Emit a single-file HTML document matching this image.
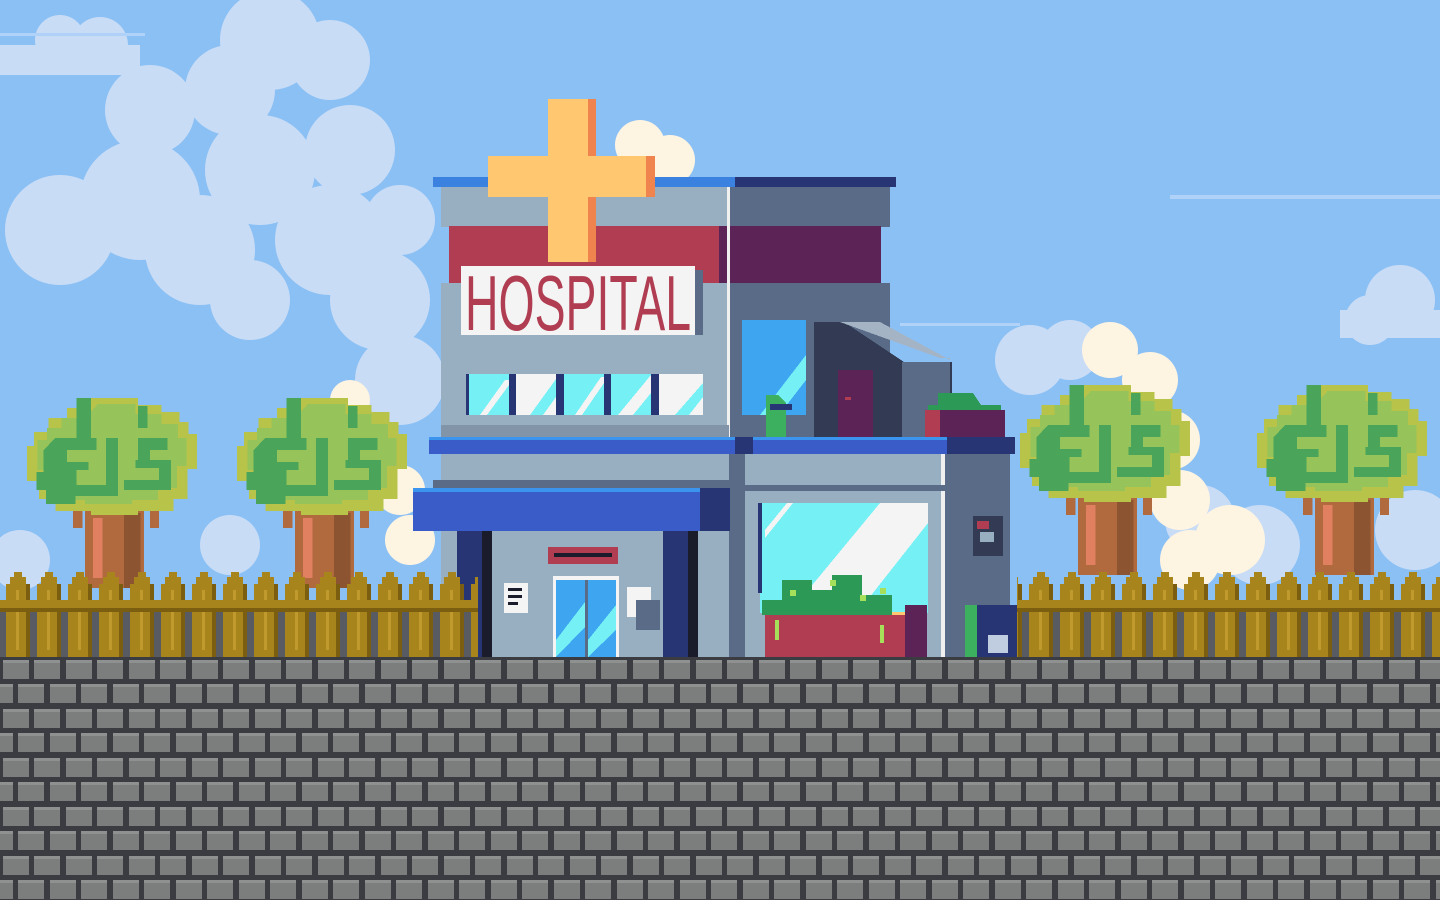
<!DOCTYPE html>
<html><head><meta charset="utf-8"><style>
html,body{margin:0;padding:0;width:1440px;height:900px;overflow:hidden;background:#8bc0f4}
svg{display:block}
</style></head><body>
<svg width="1440" height="900" viewBox="0 0 1440 900" shape-rendering="crispEdges">
<defs>
<pattern id="brick" x="0" y="657" width="63" height="49" patternUnits="userSpaceOnUse">
<rect width="63" height="49" fill="#3a3c42"/>
<rect x="3" y="3" width="26" height="19" fill="#7b7e7d"/>
<rect x="34" y="3" width="26" height="19" fill="#7b7e7d"/>
<rect x="3" y="3" width="26" height="3" fill="#8e918f"/>
<rect x="34" y="3" width="26" height="3" fill="#8e918f"/>
<rect x="-13" y="27" width="26" height="19" fill="#7b7e7d"/>
<rect x="18" y="27" width="26" height="19" fill="#7b7e7d"/>
<rect x="50" y="27" width="26" height="19" fill="#7b7e7d"/>
<rect x="18" y="27" width="26" height="3" fill="#8e918f"/>
<rect x="50" y="27" width="26" height="3" fill="#8e918f"/>
<rect x="0" y="27" width="13" height="3" fill="#8e918f"/>
</pattern>
<pattern id="fence" x="0" y="572" width="31" height="86" patternUnits="userSpaceOnUse">
<rect x="0" y="40" width="31" height="46" fill="#585c62"/>
<rect x="6" y="12" width="24" height="74" fill="#a8841c"/>
<rect x="10" y="5" width="16" height="8" fill="#a8841c"/>
<rect x="14" y="0" width="8" height="6" fill="#a8841c"/>
<rect x="26" y="12" width="4" height="74" fill="#7c5e10"/>
<rect x="16" y="18" width="3" height="60" fill="#c09a2c"/>
<rect x="0" y="28" width="31" height="12" fill="#a8841c"/>
<rect x="0" y="36" width="31" height="4" fill="#7c5e10"/>
</pattern>
<g id="tree">
<rect x="55" y="110" width="50" height="80" fill="#b06a3e"/>
<rect x="62" y="120" width="8" height="60" fill="#e08060"/>
<rect x="88" y="115" width="14" height="75" fill="#8c5430"/>
<rect x="45" y="108" width="8" height="22" fill="#b06a3e"/>
<rect x="110" y="108" width="8" height="22" fill="#b06a3e"/>
<path d="M60 0h40v7h20v7h15v10h8v12h7v35h-8v30h-12v12h-30v4h-40v-4h-30v-12h-14v-18h-10v-35h6v-14h12v-14h16v-10h20z" fill="#b8c34a"/>
<path d="M66 6h32v10h22v10h14v14h7v28h-8v22h-16v12h-22v4h-40v-4h-22v-12h-12v-18h-6v-30h8v-12h12v-10h20z" fill="#96c45a"/>
<path d="M30 40h35v12h-25v12h18v8h-10v15h25v-47h10v58h-36v8h-25v-14h-8v-18h6v-22z" fill="#4aa45a"/>
<path d="M100 40h25v12h-15v10h18v30h-40v-10h30v-12h-20v-8h2z" fill="#4aa45a"/>
<path d="M48 0h12v40h-12z M100 8h8v22h-8z" fill="#4aa45a"/>
</g>
</defs>
<!-- clouds -->
<g fill="#c9dcf6" shape-rendering="auto">
<circle cx="60" cy="230" r="55"/><circle cx="140" cy="200" r="60"/><circle cx="200" cy="250" r="55"/>
<circle cx="150" cy="110" r="45"/><circle cx="230" cy="90" r="45"/><circle cx="270" cy="40" r="50"/><circle cx="330" cy="60" r="40"/>
<circle cx="260" cy="170" r="55"/><circle cx="350" cy="150" r="45"/><circle cx="330" cy="240" r="55"/><circle cx="380" cy="300" r="50"/>
<circle cx="400" cy="220" r="35"/><circle cx="250" cy="300" r="40"/><circle cx="400" cy="380" r="45"/>
<circle cx="60" cy="40" r="25"/><circle cx="100" cy="45" r="28"/><rect x="0" y="45" width="140" height="30"/>
<circle cx="1030" cy="360" r="35"/><circle cx="1070" cy="350" r="30"/>
<circle cx="1400" cy="300" r="35"/><circle cx="1370" cy="320" r="25"/><rect x="1340" y="310" width="100" height="28"/>
<circle cx="1260" cy="545" r="40"/><circle cx="1200" cy="520" r="35"/>
<circle cx="1415" cy="530" r="40"/>
<circle cx="20" cy="560" r="30"/><circle cx="230" cy="545" r="30"/>
</g>
<g fill="#fef4e2" shape-rendering="auto">
<circle cx="640" cy="145" r="25"/><circle cx="670" cy="160" r="25"/>
<circle cx="1110" cy="350" r="28"/><circle cx="1150" cy="380" r="28"/><circle cx="1170" cy="440" r="30"/><circle cx="1180" cy="500" r="30"/>
<circle cx="1230" cy="540" r="35"/><circle cx="1190" cy="560" r="30"/>
<circle cx="350" cy="400" r="20"/><circle cx="400" cy="490" r="25"/><circle cx="410" cy="540" r="25"/>
</g>
<g fill="#b0d2f8"><rect x="1170" y="195" width="270" height="4"/><rect x="900" y="323" width="120" height="3"/><rect x="0" y="33" width="145" height="3"/></g>
<!-- trees -->
<g transform="translate(20,398) scale(1.18 1.0)"><use href="#tree"/></g>
<g transform="translate(230,398) scale(1.18 1.0)"><use href="#tree"/></g>
<g transform="translate(1013,385) scale(1.18 1.0)"><use href="#tree"/></g>
<g transform="translate(1250,385) scale(1.18 1.0)"><use href="#tree"/></g>
<!-- building -->
<rect x="433" y="177" width="463" height="10" fill="#3b82e0"/>
<rect x="735" y="177" width="161" height="10" fill="#283574"/>
<rect x="441" y="187" width="288" height="40" fill="#97afc0"/>
<rect x="729" y="187" width="161" height="40" fill="#5a6b87"/>
<rect x="449" y="226" width="270" height="57" fill="#b03d51"/>
<rect x="719" y="226" width="162" height="57" fill="#5c2456"/>
<rect x="441" y="283" width="288" height="154" fill="#97afc0"/>
<rect x="729" y="283" width="161" height="154" fill="#5a6b87"/>
<rect x="727" y="187" width="3" height="470" fill="#f0f0f0"/>
<rect x="742" y="320" width="64" height="95" fill="#3ea6f0"/>
<path d="M760 415l46-60v25l-27 35z" fill="#75f0f4"/>
<path d="M814 322h30l60 40h48v76h-138z" fill="#323a54"/>
<path d="M840 322h40l70 38v-2h-10z" fill="#a4b4c4"/>
<rect x="902" y="362" width="48" height="76" fill="#5a6b87"/>
<rect x="838" y="370" width="35" height="68" fill="#5c2456"/>
<rect x="845" y="397" width="6" height="3" fill="#b03d51"/>
<path d="M766 395h12l8 8v35h-20z" fill="#3cb05e"/>
<rect x="770" y="404" width="22" height="6" fill="#283574"/>
<path d="M928 405h10v-12h35l8 12h20v33h-73z" fill="#2c9a56"/>
<rect x="925" y="410" width="80" height="28" fill="#5c2456"/>
<rect x="925" y="410" width="15" height="28" fill="#b03d51"/>
<!-- sign -->
<rect x="461" y="266" width="234" height="69" fill="#f4f4f4"/>
<rect x="695" y="270" width="8" height="65" fill="#5a6b87"/>
<text x="578" y="330" text-anchor="middle" font-family="Liberation Sans Narrow, Liberation Sans, sans-serif" font-size="78" fill="#b03d51" textLength="226" lengthAdjust="spacingAndGlyphs">HOSPITAL</text>
<!-- windows -->
<g>
<rect x="466" y="374" width="237" height="41" fill="#283574"/>
<rect x="469" y="374" width="40" height="41" fill="#75f0f4"/><rect x="516" y="374" width="40" height="41" fill="#f4f4f4"/>
<rect x="564" y="374" width="40" height="41" fill="#75f0f4"/><rect x="611" y="374" width="40" height="41" fill="#75f0f4"/>
<rect x="659" y="374" width="44" height="41" fill="#f4f4f4"/>
<path d="M480 415l25-35h4v5l-22 30z" fill="#f4f4f4"/>
<path d="M530 415l26-36v18l-13 18z" fill="#75f0f4"/>
<path d="M575 415l26-38h3v6l-22 32z" fill="#f4f4f4"/>
<path d="M618 415l33-40v18l-18 22z" fill="#f4f4f4"/>
<path d="M675 415l28-32v14l-14 18z" fill="#75f0f4"/>
</g>
<rect x="441" y="425" width="288" height="12" fill="#8295a8"/>
<!-- cross -->
<rect x="548" y="99" width="48" height="163" fill="#ffc870"/>
<rect x="488" y="156" width="167" height="41" fill="#ffc870"/>
<rect x="588" y="99" width="8" height="163" fill="#f0844f"/>
<rect x="646" y="156" width="9" height="41" fill="#f0844f"/>
<rect x="548" y="156" width="48" height="41" fill="#ffc870"/>
<!-- ledge -->
<rect x="429" y="437" width="586" height="17" fill="#3a5cc8"/>
<rect x="429" y="437" width="586" height="3" fill="#3b95ee"/>
<rect x="735" y="437" width="18" height="17" fill="#283574"/>
<rect x="947" y="437" width="68" height="17" fill="#283574"/>
<!-- lower -->
<rect x="441" y="454" width="288" height="203" fill="#97afc0"/>
<rect x="433" y="480" width="296" height="8" fill="#5a6b87"/>
<rect x="729" y="454" width="16" height="203" fill="#5a6b87"/>
<rect x="745" y="454" width="200" height="203" fill="#97afc0"/>
<rect x="941" y="454" width="4" height="203" fill="#f0f0f0"/>
<rect x="945" y="454" width="65" height="203" fill="#5a6b87"/>
<rect x="745" y="485" width="200" height="6" fill="#5a6b87"/>
<rect x="760" y="503" width="168" height="110" fill="#75f0f4"/>
<rect x="758" y="503" width="4" height="90" fill="#283574"/>
<path d="M790 612l90-109h48v20l-70 89z" fill="#f4f4f4"/>
<path d="M765 530l22-27h6l-28 35z" fill="#f4f4f4"/>
<rect x="973" y="516" width="30" height="40" fill="#323a54"/>
<rect x="977" y="521" width="12" height="8" fill="#b03d51"/>
<rect x="980" y="532" width="14" height="10" fill="#97afc0"/>
<rect x="765" y="612" width="140" height="45" fill="#b03d51"/>
<rect x="765" y="612" width="140" height="3" fill="#ffc870"/>
<rect x="905" y="605" width="22" height="52" fill="#5c2456"/>
<path d="M762 600h20v-20h30v10h20v-15h30v20h30v20h-130z" fill="#2c9a56"/>
<g fill="#a6e05a"><rect x="790" y="590" width="6" height="6"/><rect x="830" y="580" width="6" height="6"/><rect x="860" y="595" width="6" height="6"/><rect x="880" y="588" width="6" height="6"/><rect x="775" y="620" width="4" height="20"/><rect x="880" y="625" width="4" height="18"/></g>
<rect x="965" y="605" width="55" height="52" fill="#283574"/>
<rect x="965" y="605" width="12" height="52" fill="#3cb05e"/>
<rect x="988" y="635" width="20" height="18" fill="#c0cce0"/>
<!-- awning -->
<rect x="413" y="488" width="317" height="43" fill="#3a5cc8"/>
<rect x="413" y="488" width="317" height="4" fill="#3b95ee"/>
<rect x="700" y="488" width="30" height="43" fill="#283574"/>
<rect x="457" y="531" width="25" height="126" fill="#283574"/>
<rect x="482" y="531" width="10" height="126" fill="#1a1c2c"/>
<rect x="663" y="531" width="25" height="126" fill="#283574"/>
<rect x="688" y="531" width="10" height="126" fill="#1a1c2c"/>
<rect x="441" y="531" width="16" height="126" fill="#97afc0"/>
<rect x="548" y="547" width="70" height="17" fill="#b03d51"/>
<rect x="554" y="553" width="58" height="4" fill="#1a1c2c"/>
<rect x="553" y="576" width="66" height="81" fill="#f4f4f4"/>
<rect x="556" y="580" width="60" height="77" fill="#3ea6f0"/>
<rect x="585" y="580" width="3" height="77" fill="#5a6b87"/>
<path d="M556 640l29-38v25l-29 30z M588 640l28-35v25l-28 27z" fill="#75f0f4"/>
<rect x="504" y="583" width="24" height="30" fill="#f4f4f4"/>
<g fill="#1a1c2c"><rect x="508" y="588" width="14" height="3"/><rect x="508" y="595" width="14" height="3"/><rect x="508" y="602" width="10" height="3"/></g>
<rect x="627" y="587" width="24" height="30" fill="#f4f4f4"/>
<rect x="636" y="600" width="24" height="30" fill="#5a6b87"/>
<!-- fence (in front) -->
<rect x="0" y="572" width="478" height="86" fill="url(#fence)"/>
<rect x="1017" y="572" width="423" height="86" fill="url(#fence)"/>
<!-- wall -->
<rect x="0" y="657" width="1440" height="243" fill="url(#brick)"/>
</svg>
</body></html>
